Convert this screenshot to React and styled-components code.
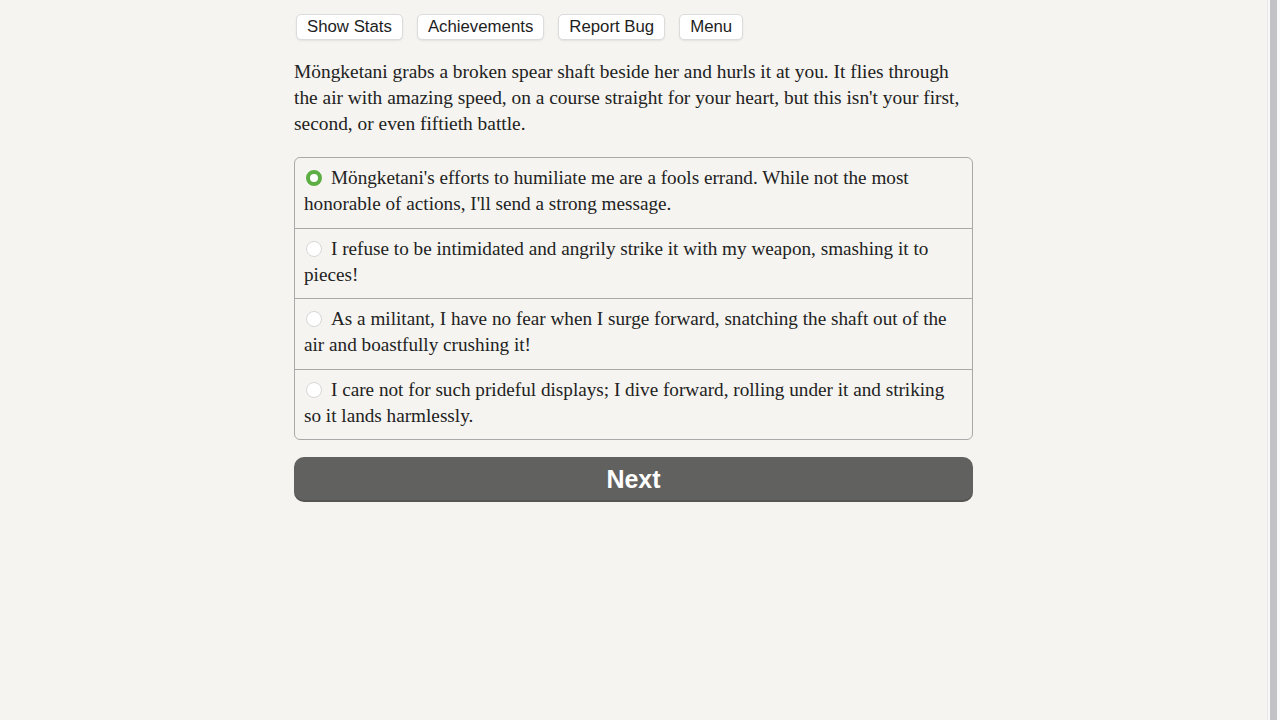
import React, { useState } from 'react'
import styled, { createGlobalStyle } from 'styled-components'

const GlobalStyle = createGlobalStyle`
  html, body {
    margin: 0;
    padding: 0;
    background: #f5f4f0;
  }
  body {
    overflow: hidden;
  }
`

const Screen = styled.div`
  display: flex;
  height: 100vh;
  width: 100%;
`

const Page = styled.div`
  flex: 1;
  display: flex;
  justify-content: center;
`

const ScrollTrack = styled.div`
  flex: 0 0 13px;
  display: flex;
  background: #f9f9f9;
  border-left: 1px solid #e6e6e6;
  box-sizing: border-box;
  padding: 0 3px 0 2px;
`

const ScrollThumb = styled.div`
  flex: 1;
  background: #c2c2c6;
`

const Column = styled.div`
  width: 679px;
  padding-top: 14px;
`

const Toolbar = styled.div`
  display: flex;
  gap: 14px;
  padding-left: 2px;
`

const ToolButton = styled.button`
  font-family: 'Liberation Sans', Arial, sans-serif;
  font-size: 16.8px;
  color: #1e1e1e;
  background: #ffffff;
  border: 1px solid #dcdcdc;
  border-radius: 5px;
  padding: 0 10px;
  height: 26px;
  box-shadow: 0 1px 2px rgba(0, 0, 0, 0.08);
`

const Story = styled.p`
  font-family: 'Liberation Serif', 'Times New Roman', serif;
  font-size: 19.4px;
  line-height: 26px;
  color: #222;
  margin: 19px 0 20px;
`

const Choices = styled.div`
  border: 1px solid #a9a9a9;
  border-radius: 6px;
  overflow: hidden;
`

const Choice = styled.label`
  display: block;
  padding: 7px 9px 10.5px;
  min-height: 52px;
  font-family: 'Liberation Serif', 'Times New Roman', serif;
  font-size: 19.2px;
  line-height: 26px;
  color: #222;
  cursor: pointer;
  & + & {
    border-top: 1px solid #a9a9a9;
  }
`

const Radio = styled.span`
  display: inline-block;
  box-sizing: border-box;
  width: 16px;
  height: 16px;
  margin: 0 9px 0 2px;
  vertical-align: -2px;
  border-radius: 50%;
  background: #ffffff;
  border: ${p => (p.$checked ? '4.5px solid #5daf45' : '1px solid #d6d6d6')};
`

const NextButton = styled.button`
  display: block;
  width: 100%;
  height: 45px;
  margin-top: 17px;
  background: #616160;
  color: #ffffff;
  border: none;
  border-radius: 10px;
  font-family: 'Liberation Sans', Arial, sans-serif;
  font-weight: bold;
  font-size: 25px;
  box-shadow: inset 0 -2px 0 rgba(0, 0, 0, 0.12);
`

const options = [
  "Möngketani's efforts to humiliate me are a fools errand. While not the most honorable of actions, I'll send a strong message.",
  'I refuse to be intimidated and angrily strike it with my weapon, smashing it to pieces!',
  'As a militant, I have no fear when I surge forward, snatching the shaft out of the air and boastfully crushing it!',
  'I care not for such prideful displays; I dive forward, rolling under it and striking so it lands harmlessly.',
]

export default function App() {
  const [picked, setPicked] = useState(0)

  return (
    <Screen>
      <GlobalStyle />
      <Page>
        <Column>
          <Toolbar>
            <ToolButton>Show Stats</ToolButton>
            <ToolButton>Achievements</ToolButton>
            <ToolButton>Report Bug</ToolButton>
            <ToolButton>Menu</ToolButton>
          </Toolbar>
          <Story>
            Möngketani grabs a broken spear shaft beside her and hurls it at you. It flies through
            the air with amazing speed, on a course straight for your heart, but this isn't your
            first, second, or even fiftieth battle.
          </Story>
          <Choices>
            {options.map((text, i) => (
              <Choice key={i} onClick={() => setPicked(i)}>
                <Radio $checked={picked === i} />
                {text}
              </Choice>
            ))}
          </Choices>
          <NextButton>Next</NextButton>
        </Column>
      </Page>
      <ScrollTrack>
        <ScrollThumb />
      </ScrollTrack>
    </Screen>
  )
}
